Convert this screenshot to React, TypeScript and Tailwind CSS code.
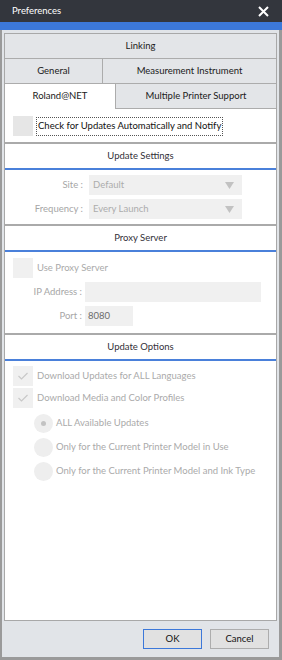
import React from 'react';

const font = { fontFamily: 'Lato, "Liberation Sans", sans-serif' };

const Check = () => (
  <svg width="12" height="10" viewBox="0 0 12 10" fill="none">
    <path d="M1.5 5 L4.5 8 L10.5 2" stroke="#c8c8c8" strokeWidth="1.2" />
  </svg>
);

const Arrow = () => (
  <svg width="9" height="7" viewBox="0 0 9 7">
    <path d="M0 0 H9 L4.5 7 Z" fill="#c2c2c2" />
  </svg>
);

const SectionHeader = ({ title }: { title: string }) => (
  <div>
    <div className="h-[2px] bg-[#aaaaaa]" />
    <div className="h-[24px] flex items-center justify-center text-[#333038]">{title}</div>
    <div className="h-[2px] bg-[#4a80da]" />
  </div>
);

const Tab = ({ label, className }: { label: string; className: string }) => (
  <div className={`h-[25px] flex items-center justify-center bg-[#e3e5e8] border-[#acacac] text-[#202020] ${className}`}>
    {label}
  </div>
);

const App = () => {
  return (
    <div className="w-[282px] h-[660px] flex flex-col text-[9.5px] select-none" style={font}>
      {/* Title bar */}
      <div className="h-[22px] bg-[#33363d] flex items-center justify-between pl-[12px] pr-[13px]">
        <span className="text-white">Preferences</span>
        <svg width="11" height="11" viewBox="0 0 11 11">
          <path d="M1 1 L10 10 M10 1 L1 10" stroke="#ffffff" strokeWidth="2" />
        </svg>
      </div>
      <div className="h-[8px] bg-[#3c78d9]" />

      {/* Body */}
      <div className="flex-1 flex flex-col bg-[#e1e4e8] border-l-2 border-r-[3px] border-b-[3px] border-[#9a9a9a] px-[2px] pt-[3px]">
        <div className="flex-1 flex flex-col border border-[#a8a8a8] bg-white">
          {/* Tabs */}
          <Tab label="Linking" className="border-b" />
          <div className="flex">
            <Tab label="General" className="w-[98px] border-b border-r" />
            <Tab label="Measurement Instrument" className="flex-1 border-b" />
          </div>
          <div className="flex">
            <div className="w-[111px] h-[25px] flex items-center justify-center bg-white border-r border-[#acacac] text-[#202020]">
              Roland@NET
            </div>
            <Tab label="Multiple Printer Support" className="flex-1 border-b" />
          </div>

          {/* Content */}
          <div className="flex-1 flex flex-col">
            <div className="flex items-center pl-[8px] pt-[7px] pb-[6px]">
              <div className="w-[20px] h-[20px] bg-[#e6e6e6]" />
              <div className="ml-[3px] h-[19px] px-[1px] flex items-center border border-dotted border-[#555] text-[#111]">
                Check for Updates Automatically and Notify
              </div>
            </div>

            <SectionHeader title="Update Settings" />
            <div className="flex flex-col gap-[4px] pt-[5px] pb-[5px]">
              {[
                ['Site :', 'Default'],
                ['Frequency :', 'Every Launch'],
              ].map(([label, value]) => (
                <div key={label} className="flex items-center">
                  <div className="w-[78px] text-right text-[#a6a6a6]">{label}</div>
                  <div className="ml-[6px] w-[153px] h-[20px] bg-[#f0f0f0] flex items-center justify-between pl-[4px] pr-[8px] text-[#acacac]">
                    <span>{value}</span>
                    <Arrow />
                  </div>
                </div>
              ))}
            </div>

            <SectionHeader title="Proxy Server" />
            <div className="flex flex-col gap-[4px] pt-[6px] pb-[7px]">
              <div className="flex items-center pl-[8px]">
                <div className="w-[20px] h-[20px] bg-[#f0f0f0]" />
                <span className="ml-[4px] text-[#aaaaaa]">Use Proxy Server</span>
              </div>
              <div className="flex items-center">
                <div className="w-[77px] text-right text-[#a6a6a6]">IP Address :</div>
                <div className="ml-[3px] w-[176px] h-[20px] bg-[#f0f0f0]" />
              </div>
              <div className="flex items-center">
                <div className="w-[77px] text-right text-[#a6a6a6]">Port :</div>
                <div className="ml-[3px] w-[48px] h-[20px] bg-[#f0f0f0] flex items-center pl-[3px] text-[#6b6b6b]">8080</div>
              </div>
            </div>

            <SectionHeader title="Update Options" />
            <div className="flex flex-col pt-[5px]">
              {['Download Updates for ALL Languages', 'Download Media and Color Profiles'].map((t, i) => (
                <div key={t} className={`flex items-center pl-[8px] ${i ? 'mt-[2px]' : ''}`}>
                  <div className="w-[20px] h-[20px] bg-[#f0f0f0] flex items-center justify-center">
                    <Check />
                  </div>
                  <span className="ml-[4px] text-[#aaaaaa]">{t}</span>
                </div>
              ))}
              {[
                'ALL Available Updates',
                'Only for the Current Printer Model in Use',
                'Only for the Current Printer Model and Ink Type',
              ].map((t, i) => (
                <div key={t} className={`flex items-center pl-[29px] ${i ? 'mt-[5px]' : 'mt-[6px]'}`}>
                  <div className="w-[19px] h-[19px] rounded-full bg-[#eeeeee] flex items-center justify-center">
                    {i === 0 && <div className="w-[5px] h-[5px] rounded-full bg-[#c2c2c2]" />}
                  </div>
                  <span className="ml-[3px] text-[#aaaaaa]">{t}</span>
                </div>
              ))}
            </div>
          </div>
        </div>

        {/* Footer */}
        <div className="h-[36px] flex items-center justify-end gap-[8px] pr-[8px]">
          <button className="w-[59px] h-[20px] bg-[#e1e1e1] border border-[#3c78d9] text-[#111]">OK</button>
          <button className="w-[59px] h-[20px] bg-[#e1e1e1] border border-[#adadad] text-[#111]">Cancel</button>
        </div>
      </div>
    </div>
  );
};

export default App;
